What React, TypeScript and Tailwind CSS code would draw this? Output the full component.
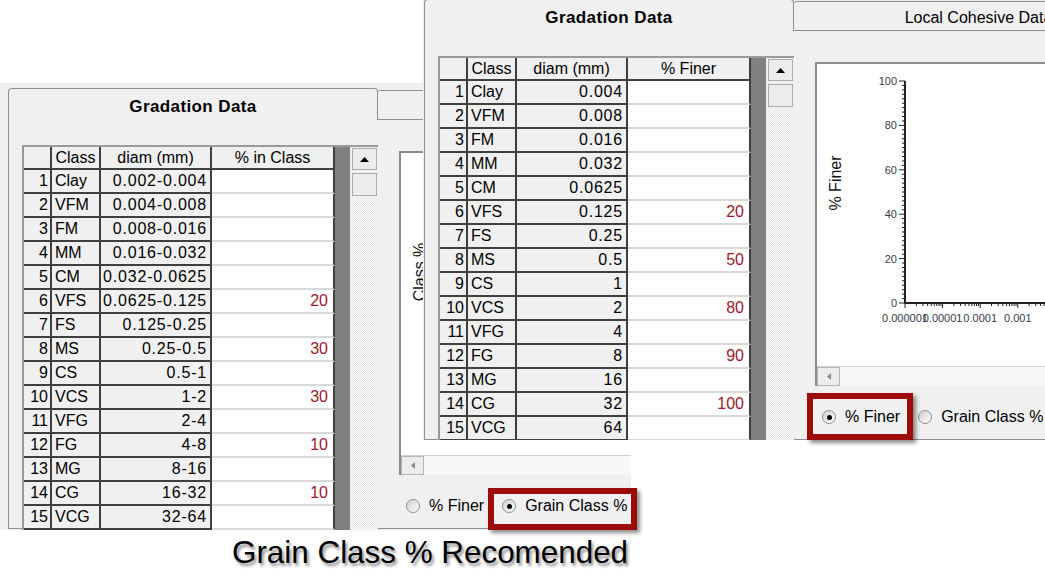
type Row = { cls: string; diam: string; val?: string };

const classRows: Row[] = [
  { cls: "Clay", diam: "0.002-0.004" },
  { cls: "VFM", diam: "0.004-0.008" },
  { cls: "FM", diam: "0.008-0.016" },
  { cls: "MM", diam: "0.016-0.032" },
  { cls: "CM", diam: "0.032-0.0625" },
  { cls: "VFS", diam: "0.0625-0.125", val: "20" },
  { cls: "FS", diam: "0.125-0.25" },
  { cls: "MS", diam: "0.25-0.5", val: "30" },
  { cls: "CS", diam: "0.5-1" },
  { cls: "VCS", diam: "1-2", val: "30" },
  { cls: "VFG", diam: "2-4" },
  { cls: "FG", diam: "4-8", val: "10" },
  { cls: "MG", diam: "8-16" },
  { cls: "CG", diam: "16-32", val: "10" },
  { cls: "VCG", diam: "32-64" },
];

const finerRows: Row[] = [
  { cls: "Clay", diam: "0.004" },
  { cls: "VFM", diam: "0.008" },
  { cls: "FM", diam: "0.016" },
  { cls: "MM", diam: "0.032" },
  { cls: "CM", diam: "0.0625" },
  { cls: "VFS", diam: "0.125", val: "20" },
  { cls: "FS", diam: "0.25" },
  { cls: "MS", diam: "0.5", val: "50" },
  { cls: "CS", diam: "1" },
  { cls: "VCS", diam: "2", val: "80" },
  { cls: "VFG", diam: "4" },
  { cls: "FG", diam: "8", val: "90" },
  { cls: "MG", diam: "16" },
  { cls: "CG", diam: "32", val: "100" },
  { cls: "VCG", diam: "64" },
];

const grayCell =
  "h-full bg-[#f0f0f0] border-r-2 border-b-2 border-[#3f3f3f] flex items-center whitespace-nowrap overflow-hidden";
const track =
  "bg-[image:repeating-conic-gradient(#e6e6e6_0%_25%,#fbfbfb_0%_50%)] bg-[length:2px_2px]";

function VScroll() {
  return (
    <div className={`w-[28px] h-full flex flex-col ${track}`}>
      <div className="mt-px ml-[2px] w-[25px] h-[22px] border border-[#acacac] bg-[#ececec] flex items-center justify-center">
        <svg width="9" height="5" viewBox="0 0 9 5">
          <polygon points="0,5 4.5,0 9,5" fill="#000" />
        </svg>
      </div>
      <div className="mt-[3px] ml-[2px] w-[25px] h-[23px] border border-[#acacac] bg-[#ececec]" />
    </div>
  );
}

function Grid({ header, rows }: { header: string; rows: Row[] }) {
  return (
    <div className="flex w-[356px] h-[420px] shrink-0 border-t-2 border-l-2 border-[#9a9a9a] bg-[#808080] overflow-hidden">
      <div className="w-[326px] flex flex-col">
        <div className="flex h-[23px]">
          <div className={`${grayCell} w-[28px]`} />
          <div className={`${grayCell} w-[49px] justify-center`}>Class</div>
          <div className={`${grayCell} w-[111px] justify-center`}>diam (mm)</div>
          <div className={`${grayCell} w-[123px] justify-center`}>{header}</div>
        </div>
        {rows.map((r, i) => (
          <div key={i} className="flex h-[24px]">
            <div className={`${grayCell} w-[28px] justify-end pr-[2px]`}>{i + 1}</div>
            <div className={`${grayCell} w-[49px] pl-[3px]`}>{r.cls}</div>
            <div className={`${grayCell} w-[111px] justify-end pr-[3px] tracking-[0.8px]`}>{r.diam}</div>
            <div className="h-full w-[123px] bg-white border-r-2 border-r-[#3f3f3f] border-b-2 border-b-[#d9d9d9] flex items-center justify-end pr-[5px] text-[#9c1a2a]">
              {r.val}
            </div>
          </div>
        ))}
      </div>
      <VScroll />
    </div>
  );
}

// plot=false: only the axis title is drawn (the rest lies under the other window anyway)
function Chart({ yLabel, plot }: { yLabel: string; plot: boolean }) {
  const x0 = 88;
  const dec = 37.6;
  const yTicks: JSX.Element[] = [];
  for (let v = 0; v <= 100; v += 2) {
    const y = 239 - v * 2.22;
    const len = v % 20 === 0 ? 6 : 3;
    yTicks.push(<line key={`y${v}`} x1={x0 - len} x2={x0} y1={y} y2={y} stroke="#222" strokeWidth="1" />);
  }
  const xTicks: JSX.Element[] = [];
  for (let k = 0; k < 7; k++) {
    for (let m = 1; m <= 9; m++) {
      const x = x0 + (k + Math.log10(m)) * dec;
      const len = m === 1 ? 5 : 3;
      xTicks.push(<line key={`x${k}-${m}`} x1={x} x2={x} y1={239} y2={239 + len} stroke="#222" strokeWidth="1" />);
    }
  }
  const xLabels = ["0.000001", "0.00001", "0.0001", "0.001"];
  return (
    <svg width="259" height="302" className="block">
      <text
        x="18"
        y="119"
        transform="rotate(-90 18 119)"
        textAnchor="middle"
        dominantBaseline="central"
        fontSize="16"
        fill="#111"
      >
        {yLabel}
      </text>
      {plot && (
        <>
          {[0, 20, 40, 60, 80, 100].map((v) => (
            <text key={v} x="80" y={239 - v * 2.22} textAnchor="end" dominantBaseline="central" fontSize="11" fill="#3a3a48">
              {v}
            </text>
          ))}
          {xLabels.map((l, k) => (
            <text key={l} x={x0 + k * dec} y="254" textAnchor="middle" dominantBaseline="central" fontSize="11" fill="#3a3a48">
              {l}
            </text>
          ))}
          <line x1={x0} x2={x0} y1="17" y2="239.5" stroke="#222" strokeWidth="2" />
          <line x1={x0} x2="259" y1="239" y2="239" stroke="#222" strokeWidth="2" />
          {yTicks}
          {xTicks}
        </>
      )}
    </svg>
  );
}

function Radio({ on, label }: { on: boolean; label: string }) {
  return (
    <div className="flex items-center">
      <span className="w-[14px] h-[14px] rounded-full border border-[#8f8f8f] bg-gradient-to-br from-[#cfcfcf] to-white flex items-center justify-center">
        {on && <span className="w-[5px] h-[5px] rounded-full bg-black" />}
      </span>
      <span className="ml-[9px] whitespace-nowrap">{label}</span>
    </div>
  );
}

function Dialog({
  header,
  rows,
  yLabel,
  finer,
  full,
}: {
  header: string;
  rows: Row[];
  yLabel: string;
  finer: boolean;
  full: boolean;
}) {
  return (
    <div className="w-[660px] h-[460px] bg-[#f0f0f0] pt-[5px] pl-[8px] text-[16px] text-black">
      <div className="flex items-end">
        <div className="w-[370px] h-[32px] shrink-0 rounded-t-[4px] border border-b-0 border-[#8c8f96] pt-[5px] flex items-center justify-center font-bold text-[17px] tracking-[0.4px]">
          Gradation Data
        </div>
        <div className="w-[370px] h-[30px] shrink-0 rounded-t-[3px] border border-l-0 border-[#8c8f96] pt-[4px] flex items-center justify-center whitespace-nowrap">
          {full ? "Local Cohesive Data" : ""}
        </div>
      </div>
      <div className="h-[409px] border-l border-b border-[#8c8f96] flex items-start pl-[13px] pt-[25px]">
        <Grid header={header} rows={rows} />
        <div className="ml-[21px] mt-[6px] w-[261px] shrink-0 flex flex-col">
          <div className="border-t-2 border-l-2 border-[#8a8a8a] bg-white">
            <Chart yLabel={yLabel} plot={full} />
            <div className="flex h-[20px] border-t border-[#d0d0d0] bg-[#f7f7f7]">
              <div className="w-[23px] h-full border border-[#b5b5b5] bg-[#ececec] flex items-center justify-center">
                <svg width="4" height="7" viewBox="0 0 4 7">
                  <polygon points="4,0 0,3.5 4,7" fill="#8a8a8a" />
                </svg>
              </div>
            </div>
          </div>
          <div className="mt-[21px] h-[20px] flex items-center pl-[7px] gap-[18px]">
            <Radio on={finer} label="% Finer" />
            <Radio on={!finer} label="Grain Class %" />
          </div>
        </div>
      </div>
    </div>
  );
}

export default function App() {
  return (
    <div className="relative w-[1045px] h-[577px] overflow-hidden bg-white font-['Liberation_Sans',Arial,sans-serif]">
      <div className="absolute left-0 top-[83px] w-[631px] h-[447px] overflow-hidden">
        <Dialog header="% in Class" rows={classRows} yLabel="Class %" finer={false} full={false} />
      </div>
      <div className="absolute left-[423px] top-0 w-[622px] h-[440px] overflow-hidden">
        <div className="-ml-[7px] -mt-[6px]">
          <Dialog header="% Finer" rows={finerRows} yLabel="% Finer" finer={true} full={true} />
        </div>
      </div>

      <div className="absolute left-[807px] top-[393px] w-[106px] h-[47px] border-[6px] border-[#9e0b0b] shadow-[3px_3px_4px_rgba(0,0,0,0.45)]" />
      <div className="absolute left-[488px] top-[488px] w-[149px] h-[42px] border-[6px] border-[#9e0b0b] shadow-[3px_3px_4px_rgba(0,0,0,0.45)]" />

      <div className="absolute left-[232px] top-[537px] text-[31.4px] leading-none text-black whitespace-nowrap [text-shadow:2px_3px_3px_rgba(0,0,0,0.45)]">
        Grain Class % Recomended
      </div>
    </div>
  );
}
